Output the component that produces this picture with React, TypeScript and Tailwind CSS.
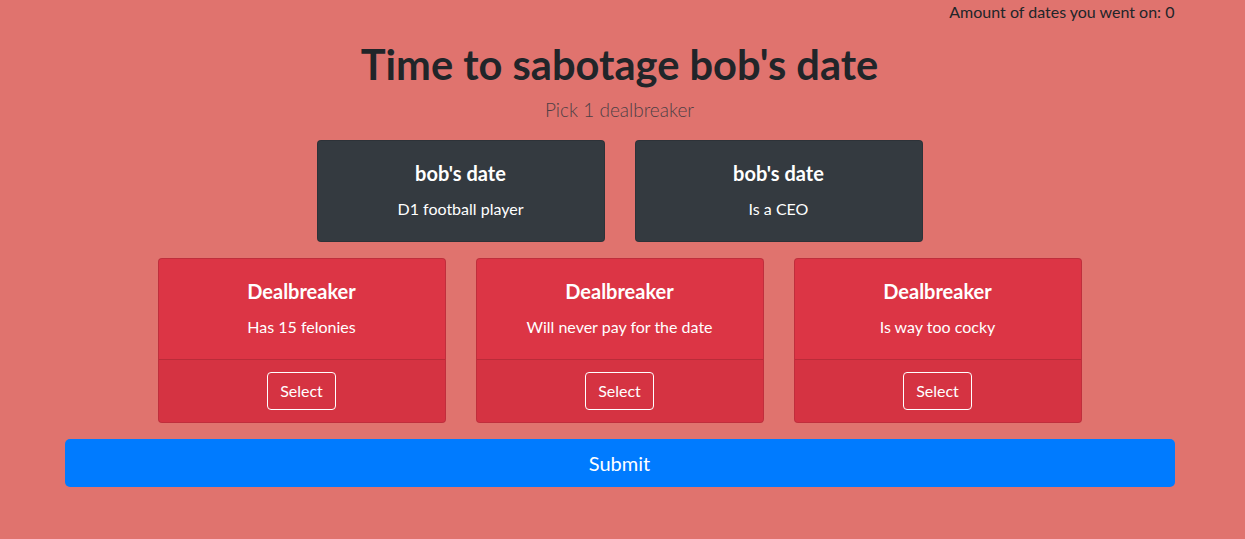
import React from 'react';

const DATE_TRAITS = ['D1 football player', 'Is a CEO'];
const DEALBREAKERS = ['Has 15 felonies', 'Will never pay for the date', 'Is way too cocky'];

export default function App() {
  return (
    <div
      className="min-h-[539px] w-[1245px] bg-[#e0736e] text-[#212529]"
      style={{ fontFamily: 'Lato, "Liberation Sans", sans-serif' }}
    >
      <div className="mx-auto w-[1110px] -translate-x-[3px]">
        {/* Counter */}
        <div className="flex justify-end text-base leading-6">Amount of dates you went on: 0</div>

        {/* Heading */}
        <h1 className="mt-[16px] mb-[7px] text-center text-[41.6px] leading-[48px] font-bold">
          Time to sabotage bob's date
        </h1>
        <p className="text-center text-[19px] leading-[30px] font-light text-[#4f3f45]">Pick 1 dealbreaker</p>

        {/* Date cards */}
        <div className="mt-[15px] flex justify-center gap-[30px]">
          {DATE_TRAITS.map(t => (
            <div
              key={t}
              className="w-[288px] rounded border border-black/[.125] bg-[#343a40] p-5 text-center text-white"
            >
              <h5 className="mb-3 text-xl leading-6 font-bold">bob's date</h5>
              <p className="text-base leading-6">{t}</p>
            </div>
          ))}
        </div>

        {/* Dealbreakers */}
        <div className="mt-4 flex justify-center gap-[30px]">
          {DEALBREAKERS.map(d => (
            <div
              key={d}
              className="w-[288px] overflow-hidden rounded border border-black/[.125] bg-[#dc3545] text-center text-white"
            >
              <div className="p-5">
                <h5 className="mb-3 text-xl leading-6 font-bold">Dealbreaker</h5>
                <p className="text-base leading-6">{d}</p>
              </div>
              <div className="border-t border-black/[.125] bg-black/[.03] px-5 py-3">
                <button className="h-[38px] rounded border border-white px-3 text-base leading-6 text-white">
                  Select
                </button>
              </div>
            </div>
          ))}
        </div>

        {/* Submit */}
        <button className="mt-4 h-12 w-full rounded-[5px] bg-[#007bff] text-xl text-white">Submit</button>
      </div>
    </div>
  );
}
